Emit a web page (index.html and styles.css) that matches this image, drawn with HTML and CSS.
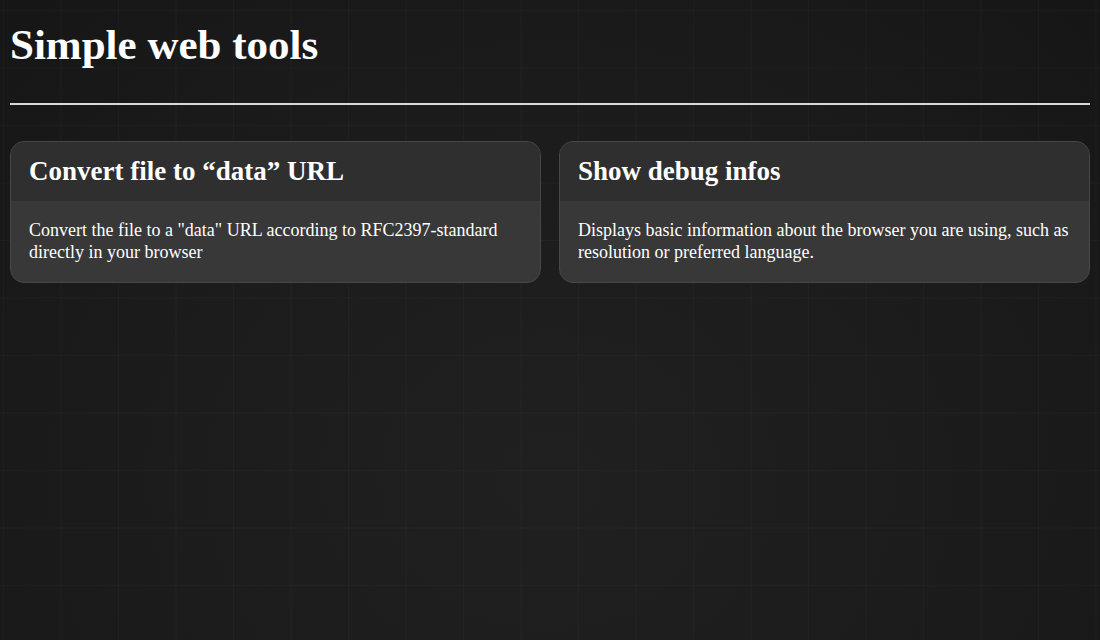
FILE: index.html
```html
<!DOCTYPE html>
<html lang="en">
<head>
<meta charset="utf-8">
<title>Simple web tools</title>
<link rel="stylesheet" href="styles.css">
</head>
<body>
<header class="page-header">
  <h1 class="page-title">Simple web tools</h1>
</header>
<hr class="divider">
<main class="tools">
  <a class="card" href="#">
    <div class="card-head"><h2 class="card-title">Convert file to “data” URL</h2></div>
    <div class="card-body"><p class="card-text">Convert the file to a "data" URL according to RFC2397-standard directly in your browser</p></div>
  </a>
  <a class="card" href="#">
    <div class="card-head"><h2 class="card-title">Show debug infos</h2></div>
    <div class="card-body"><p class="card-text">Displays basic information about the browser you are using, such as resolution or preferred language.</p></div>
  </a>
</main>
</body>
</html>
```
FILE: styles.css
```css
html, body {
  margin: 0;
  height: 100%;
}
body {
  padding: 0 10px;
  box-sizing: border-box;
  font-family: "Liberation Serif", "Times New Roman", serif;
  color: #ffffff;
  background-color: #1b1b1b;
  background-image:
    linear-gradient(rgba(255,255,255,0.025) 1px, transparent 1px),
    linear-gradient(90deg, rgba(255,255,255,0.025) 1px, transparent 1px),
    radial-gradient(ellipse at 50% 75%, #202020 0%, #1b1b1b 60%, #161616 100%);
  background-size: 57.5px 57.5px, 57.5px 57.5px, 100% 100%;
  background-position: 0 10px, 3px 0, 0 0;
}
.page-header {
  padding-top: 19px;
}
.page-title {
  margin: 0;
  font-size: 43px;
  font-weight: bold;
  line-height: 52px;
}
.divider {
  margin: 32px 0 36px;
  border: 0;
  height: 2px;
  background: #d9d9d9;
}
.tools {
  display: grid;
  grid-template-columns: 1fr 1fr;
  gap: 18px;
}
.card {
  display: block;
  text-decoration: none;
  color: #fff;
  border: 1px solid #474747;
  border-radius: 14px;
  overflow: hidden;
  background: #383838;
}
.card-head {
  background: #2f2f2f;
  height: 59px;
  padding: 0 18px;
  display: flex;
  align-items: center;
}
.card-title {
  margin: 0;
  font-size: 27px;
  font-weight: bold;
}
.card-body {
  padding: 18px 18px 19px;
}
.card-text {
  margin: 0;
  font-size: 18px;
  line-height: 22px;
}
```
